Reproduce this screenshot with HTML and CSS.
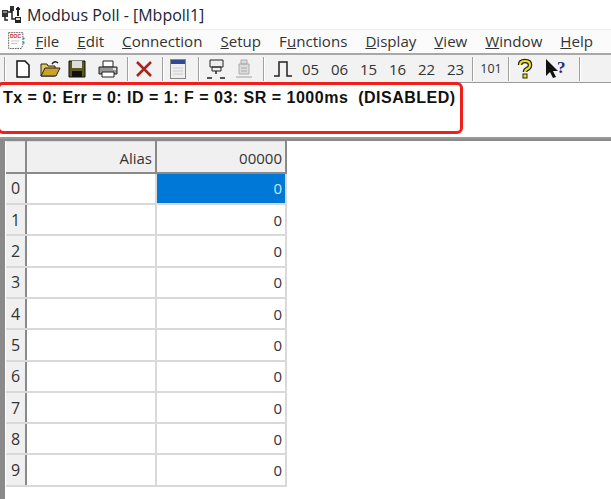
FILE: index.html
```html
<!DOCTYPE html>
<html lang="en">
<head>
  <meta charset="UTF-8" />
  <title>Modbus Poll - [Mbpoll1]</title>
  <link rel="stylesheet" href="styles.css">
</head>
<body>
  <!-- Title bar -->
  <div class="titlebar">
    <svg class="app-icon" width="22" height="22" viewBox="0 0 22 22">
      <path d="M1 6h6v7H1zM9 2h4v5H9z" fill="#333"/>
      <path d="M7 8h3V5M11 7v8h5M4 13v3h3" fill="none" stroke="#222" stroke-width="1.5"/>
      <path d="M17 3v9M15 5h4" stroke="#222" stroke-width="2"/>
      <path d="M14 13h6v6h-6z" fill="#222"/>
      <path d="M15 14h4v2h-4z" fill="#ddd"/>
      <path d="M2 8h4" stroke="#ddd"/>
    </svg>
    <span>Modbus Poll - [Mbpoll1]</span>
  </div>

  <!-- Menu -->
  <div class="menubar">
    <svg class="doc-icon" width="22" height="24" viewBox="0 0 22 24">
      <path d="M2 2h17v15l-2 4H2z" fill="#fff" stroke="#444" stroke-dasharray="2 1"/>
      <text x="3.5" y="9" class="doc-mark">DOC</text>
      <path d="M5 12h10M5 15h7" stroke="#bbb"/>
      <path d="M20 8v2M20 13v2" stroke="#2a8c7a" stroke-width="2"/>
    </svg>
    <a><u>F</u>ile</a>
    <a><u>E</u>dit</a>
    <a><u>C</u>onnection</a>
    <a><u>S</u>etup</a>
    <a>F<u>u</u>nctions</a>
    <a><u>D</u>isplay</a>
    <a><u>V</u>iew</a>
    <a><u>W</u>indow</a>
    <a><u>H</u>elp</a>
  </div>

  <!-- Toolbar -->
  <div class="toolbar">
    <i class="sep first"></i>
    <svg class="tool" width="20" height="20" viewBox="0 0 20 20"><path d="M4 2h8l4 4v12H4z" fill="#fff" stroke="#111" stroke-width="1.5"/></svg>
    <svg class="tool" width="22" height="20" viewBox="0 0 22 20"><path d="M2 5h6l1 2h7v10H2z" fill="#e8c95a" stroke="#222"/><path d="M2 17l4-8h15l-4 8z" fill="#c9a227" stroke="#222"/><path d="M13 5q3-4 6-1" fill="none" stroke="#222" stroke-width="1.5"/></svg>
    <svg class="tool" width="20" height="20" viewBox="0 0 20 20"><path d="M2 2h16v16H2z" fill="#5c5a1e" stroke="#111"/><rect x="5" y="2" width="10" height="7" fill="#ddd"/><rect x="5" y="12" width="10" height="6" fill="#111"/></svg>
    <svg class="tool print" width="22" height="20" viewBox="0 0 22 20"><path d="M6 2h10v6H6z" fill="#fff" stroke="#222"/><path d="M2 8h18v7H2z" fill="#999" stroke="#222"/><path d="M5 13h12v5H5z" fill="#fff" stroke="#222"/><path d="M16 10h3" stroke="#fff" stroke-width="1.5"/></svg>
    <i class="sep"></i>
    <svg class="tool tight" width="20" height="20" viewBox="0 0 20 20"><path d="M3 3l14 14M17 3L3 17" stroke="#a5271e" stroke-width="2.6"/></svg>
    <i class="sep"></i>
    <svg class="tool" width="18" height="22" viewBox="0 0 18 22"><rect x="1.5" y="1.5" width="15" height="19" fill="#eee" stroke="#888"/><rect x="2" y="2" width="14" height="4" fill="#2f4a94"/><path d="M4 10h10M4 13h10M4 16h10" stroke="#ccc"/></svg>
    <i class="sep"></i>
    <svg class="tool" width="22" height="22" viewBox="0 0 22 22"><path d="M5 2h13v7H5zM7 9h9v4H7z" fill="#eee" stroke="#222"/><path d="M11 13v3M2 20h5M15 20h5" stroke="#222" stroke-width="1.5"/></svg>
    <svg class="tool tight" width="22" height="22" viewBox="0 0 22 22"><path d="M8 2h6v4H8zM6 6h10v10H6z" fill="#ddd" stroke="#aaa"/><path d="M8 10h6M8 13h6M3 19h16" stroke="#bbb" stroke-width="1.5"/></svg>
    <i class="sep"></i>
    <svg class="tool pulse" width="20" height="20" viewBox="0 0 20 20"><path d="M1 17h5V3h8v14h5" fill="none" stroke="#222" stroke-width="1.5"/></svg>
    <span class="code">05</span><span class="code">06</span><span class="code">15</span><span class="code">16</span><span class="code">22</span><span class="code">23</span>
    <i class="sep after-codes"></i>
    <span class="code small">101</span>
    <i class="sep"></i>
    <svg class="tool" width="20" height="22" viewBox="0 0 20 22"><path d="M5 7q0-4 5-4t5 4q0 3-3 4-2 1-2 3" fill="none" stroke="#222" stroke-width="4.5"/><path d="M5 7q0-4 5-4t5 4q0 3-3 4-2 1-2 3" fill="none" stroke="#f2e21c" stroke-width="2"/><rect x="8" y="16" width="4" height="4" fill="#f2e21c" stroke="#222"/></svg>
    <svg class="tool help" width="28" height="22" viewBox="0 0 28 22"><path d="M3 1v17l4-4 3 6 3-1-3-6h5z" fill="#111"/><text x="14" y="15" class="help-mark">?</text></svg>
    <i class="sep last"></i>
  </div>

  <!-- Status pane -->
  <div class="status">Tx = 0: Err = 0: ID = 1: F = 03: SR = 1000ms&nbsp; (DISABLED)</div>
  <div class="redbox"></div>

  <!-- Register grid -->
  <div class="gridwrap">
    <table class="grid">
      <tr>
        <th class="rowhead corner"></th>
        <th class="col-alias">Alias</th>
        <th class="col-value active">00000</th>
      </tr>
      <tr><th class="rowhead current">0</th><td></td><td class="selected">0</td></tr>
      <tr><th class="rowhead">1</th><td></td><td>0</td></tr>
      <tr><th class="rowhead">2</th><td></td><td>0</td></tr>
      <tr><th class="rowhead">3</th><td></td><td>0</td></tr>
      <tr><th class="rowhead">4</th><td></td><td>0</td></tr>
      <tr><th class="rowhead">5</th><td></td><td>0</td></tr>
      <tr><th class="rowhead">6</th><td></td><td>0</td></tr>
      <tr><th class="rowhead">7</th><td></td><td>0</td></tr>
      <tr><th class="rowhead">8</th><td></td><td>0</td></tr>
      <tr><th class="rowhead">9</th><td></td><td>0</td></tr>
    </table>
  </div>
</body>
</html>
```

FILE: styles.css
```css
* { box-sizing: border-box; }
html, body { height: 100%; }
body {
  margin: 0;
  background: #fff;
  font-family: "Open Sans", "Noto Sans", sans-serif;
  color: #222;
  overflow: hidden;
  position: relative;
  width: 611px;
  height: 499px;
}
.titlebar {
  height: 29px;
  display: flex;
  align-items: center;
  gap: 4px;
  padding-left: 1px;
  font-size: 16px;
  color: #1a2433;
}
.menubar {
  height: 26px;
  display: flex;
  align-items: center;
  font-size: 15.1px;
  color: #333;
  padding: 0 0 2px 7px;
  background: #fbfbfb;
  border-top: 1px solid #eee;
  border-bottom: 2px solid #a8a8a8;
}
.doc-icon { margin-right: 10px; }
.doc-mark {
  font: bold 6px "Liberation Sans", sans-serif;
  fill: #d0202a;
}
.menubar a { margin-right: 18px; white-space: nowrap; }
.toolbar {
  height: 28px;
  display: flex;
  align-items: center;
  background: #f2f2f2;
  padding-left: 4px;
  border-bottom: 1px solid #999;
}
.sep {
  width: 2px;
  height: 24px;
  background: #a0a0a0;
  border-right: 1px solid #fff;
  margin: 0 5px;
}
.sep.first { margin: 0 7px 0 0; }
.sep.after-codes { margin-left: 2px; }
.sep.last { margin-left: 2px; }
.tool { margin-right: 6px; flex: none; }
.tool.print { margin-left: 4px; margin-right: 3px; }
.tool.tight { margin-right: 3px; }
.tool.pulse { margin-left: 3px; margin-right: 3px; }
.tool.help { margin-left: 2px; }
.code {
  width: 29px;
  text-align: center;
  font-size: 15px;
  color: #333;
}
.code.small { font-size: 12.5px; width: 24px; }
.help-mark {
  font: bold 17px "Liberation Serif", serif;
  fill: #1c2a7a;
}
.status {
  height: 56px;
  padding: 6px 0 0 3px;
  font: bold 16px "Liberation Sans", sans-serif;
  letter-spacing: 0.5px;
  color: #111;
  border-bottom: 2px solid #999;
  white-space: pre;
}
/* annotation drawn on top of the screenshot */
.redbox {
  position: absolute;
  left: -3px;
  top: 82px;
  width: 466px;
  height: 52px;
  border: 3px solid #f01f1a;
  border-radius: 6px;
}
.gridwrap {
  height: 360px;
  border-left: 5px solid #8a8a8a;
  border-top: 2px solid #8a8a8a;
  padding: 0 0 0 1px;
}
.grid {
  border-collapse: collapse;
  table-layout: fixed;
  width: 280px;
  font-size: 15px;
  color: #333;
}
.grid tr { height: 31.3px; }
.grid th, .grid td {
  padding: 0 3px 0 0;
  text-align: right;
  font-weight: normal;
  border: 2px solid #d9d9d9;
}
.grid tr:first-child th {
  background: #f0f0f0;
  padding-top: 3px;
  border: none;
  border-top: 1px solid #ddd;
  border-bottom: 2px solid #8a8a8a;
  border-right: 2px solid #8a8a8a;
}
.grid th.rowhead {
  width: 20px;
  background: #f0f0f0;
  text-align: center;
  padding: 0;
  font-size: 16px;
  border-left: none;
  border-right: 2px solid #8a8a8a;
  border-bottom: 2px solid #d9d9d9;
}
.grid .col-alias { width: 130px; }
.grid .col-value { width: 130px; }
.grid td.selected {
  background: #0078d7;
  color: #cfe6fa;
}
```
